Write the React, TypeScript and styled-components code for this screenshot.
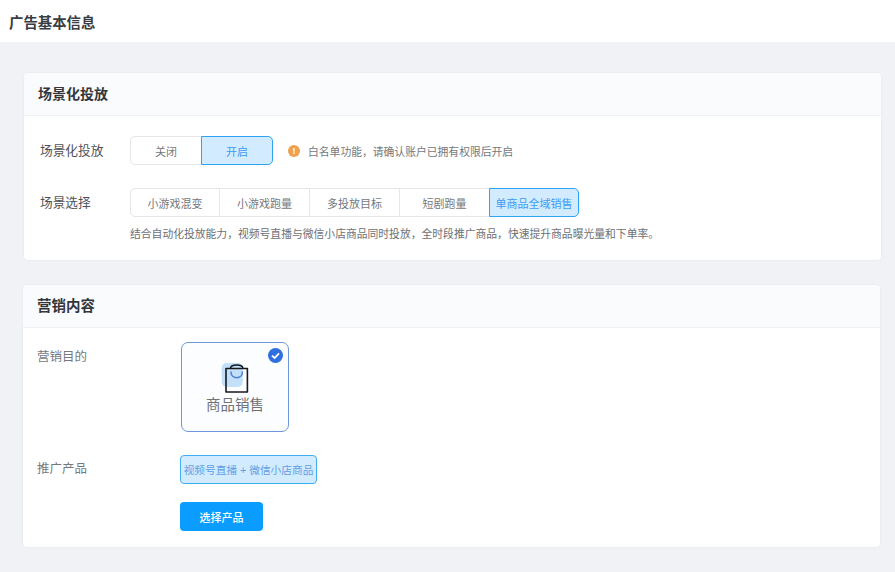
import React from 'react';
import styled, { createGlobalStyle } from 'styled-components';

const GlobalStyle = createGlobalStyle`
  html, body {
    margin: 0;
    padding: 0;
    background: #f0f2f5;
    font-family: "Liberation Sans", "Noto Sans CJK SC", sans-serif;
  }
`;

const Page = styled.div`
  width: 895px;
  height: 572px;
  overflow: hidden;
`;

const TopBar = styled.header`
  height: 42px;
  box-sizing: border-box;
  background: #fff;
  padding: 0 9px;
  display: flex;
  align-items: center;
  font-size: 14.4px;
  font-weight: 700;
  color: #3a3d42;
`;

const Content = styled.main`
  display: flex;
  flex-direction: column;
  gap: 25px;
  padding: 31px 15px 0 23px;
`;

const Card = styled.section<{ $indent?: number }>`
  margin-left: ${(props) => props.$indent || 0}px;
  margin-right: ${(props) => (props.$indent ? -props.$indent : 0)}px;
  background: #fff;
  border-radius: 4px;
  box-shadow: 0 0 2px rgba(40, 50, 70, 0.08);
`;

const CardHead = styled.div<{ $size?: number }>`
  height: 43px;
  box-sizing: border-box;
  display: flex;
  align-items: center;
  padding: 0 0 3px 14px;
  background: #fafbfd;
  border-bottom: 1px solid #eef0f4;
  border-radius: 4px 4px 0 0;
  font-size: ${(props) => props.$size || 14}px;
  font-weight: 700;
  color: #33363b;
`;

const SceneBody = styled.div`
  height: 144px;
  box-sizing: border-box;
  padding: 20px 16px 0;
  display: flex;
  flex-direction: column;
  gap: 23px;
`;

const SceneRow = styled.div`
  display: flex;
  align-items: center;
`;

const SceneLabel = styled.div`
  width: 90px;
  padding-bottom: 2px;
  font-size: 12.7px;
  color: #4e5258;
`;

const Segments = styled.div`
  display: flex;
`;

const Segment = styled.div<{ $width: number; $active?: boolean }>`
  width: ${(props) => props.$width}px;
  height: 29px;
  box-sizing: border-box;
  margin-left: -1px;
  display: flex;
  align-items: center;
  justify-content: center;
  font-size: 11px;
  color: ${(props) => (props.$active ? '#3f9cf2' : '#75787d')};
  background: ${(props) => (props.$active ? '#d2ebff' : '#fff')};
  border: 1px solid ${(props) => (props.$active ? '#2ea4f4' : '#e4e6ea')};
  position: relative;
  z-index: ${(props) => (props.$active ? 1 : 0)};

  &:first-child {
    margin-left: 0;
    border-radius: 5px 0 0 5px;
  }

  &:last-child {
    border-radius: 0 5px 5px 0;
  }
`;

const Notice = styled.div`
  margin-left: 15px;
  display: flex;
  align-items: center;
  gap: 8px;
  font-size: 10.8px;
  color: #75787d;
`;

const NoticeDot = styled.span`
  width: 12px;
  height: 12px;
  border-radius: 50%;
  background: #f0a050;
  color: #fff;
  font-size: 9px;
  font-weight: 700;
  line-height: 12px;
  text-align: center;
`;

const Hint = styled.div`
  margin: -15px 0 0 90px;
  font-size: 10.8px;
  color: #6d7075;
`;

const MarketBody = styled.div`
  height: 219px;
  box-sizing: border-box;
  padding: 14px 0 0 14px;
  display: grid;
  grid-template-columns: 143px 1fr;
  grid-template-rows: 90px 52px 47px;
`;

const MarketLabel = styled.div<{ $top: number }>`
  padding-top: ${(props) => props.$top}px;
  font-size: 12.5px;
  line-height: 14px;
  color: #75787d;
`;

const GoalTile = styled.div`
  position: relative;
  width: 108px;
  height: 90px;
  margin-left: 1px;
  box-sizing: border-box;
  border: 1px solid #6c97dc;
  border-radius: 7px;
  background: #fcfdff;
  display: flex;
  flex-direction: column;
  align-items: center;
  padding-top: 20px;
  gap: 4px;
  font-size: 14.5px;
  line-height: 17px;
  color: #6f7277;
`;

const CheckBadge = styled.svg`
  position: absolute;
  top: 5px;
  right: 5px;
`;

const ProductCell = styled.div`
  padding-top: 23px;
`;

const ProductTag = styled.div`
  width: 137px;
  height: 29px;
  box-sizing: border-box;
  display: flex;
  align-items: center;
  justify-content: center;
  white-space: nowrap;
  font-size: 10.7px;
  color: #5e9fe6;
  background: #d2ebff;
  border: 1px solid #40aef5;
  border-radius: 4px;
`;

const ButtonCell = styled.div`
  padding-top: 18px;
`;

const PickButton = styled.button`
  width: 83px;
  height: 29px;
  padding: 0;
  border: none;
  border-radius: 4px;
  background: #0a9cff;
  color: #fff;
  font-family: inherit;
  font-size: 11px;
  font-weight: 500;
`;

function BagIcon() {
  return (
    <svg width="32" height="30" viewBox="0 0 32 30">
      <rect x="2.7" y="0" width="21" height="24" rx="5" fill="#c3e0fb" />
      <path d="M7 5.5 H28.4 V29 H7 Z" fill="none" stroke="#16191e" strokeWidth="1.6" strokeLinejoin="round" />
      <path d="M11.5 5.5 C11.5 0.8 23.9 0.8 23.9 5.5" fill="none" stroke="#16191e" strokeWidth="1.6" />
      <path d="M12 9 C12 16.5 23.4 16.5 23.4 9" fill="none" stroke="#4d7fd8" strokeWidth="1.5" strokeLinecap="round" />
    </svg>
  );
}

const sceneOptions = ['小游戏混变', '小游戏跑量', '多投放目标', '短剧跑量', '单商品全域销售'];

export default function App() {
  return (
    <Page>
      <GlobalStyle />
      <TopBar>广告基本信息</TopBar>
      <Content>
        <Card $indent={1}>
          <CardHead>场景化投放</CardHead>
          <SceneBody>
            <SceneRow>
              <SceneLabel>场景化投放</SceneLabel>
              <Segments>
                <Segment $width={72}>关闭</Segment>
                <Segment $width={72} $active>开启</Segment>
              </Segments>
              <Notice>
                <NoticeDot>!</NoticeDot>
                白名单功能，请确认账户已拥有权限后开启
              </Notice>
            </SceneRow>
            <SceneRow>
              <SceneLabel>场景选择</SceneLabel>
              <Segments>
                {sceneOptions.map((option, index) => (
                  <Segment key={option} $width={index === 0 ? 90 : index === 4 ? 90 : 91} $active={index === 4}>
                    {option}
                  </Segment>
                ))}
              </Segments>
            </SceneRow>
            <Hint>结合自动化投放能力，视频号直播与微信小店商品同时投放，全时段推广商品，快速提升商品曝光量和下单率。</Hint>
          </SceneBody>
        </Card>
        <Card>
          <CardHead $size={14.5}>营销内容</CardHead>
          <MarketBody>
            <MarketLabel $top={8}>营销目的</MarketLabel>
            <GoalTile>
              <CheckBadge width="15" height="15" viewBox="0 0 15 15">
                <circle cx="7.5" cy="7.5" r="7.5" fill="#2f6fde" />
                <path d="M4 7.6 L6.6 10 L11 5.4" fill="none" stroke="#fff" strokeWidth="1.8" />
              </CheckBadge>
              <BagIcon />
              商品销售
            </GoalTile>
            <MarketLabel $top={30}>推广产品</MarketLabel>
            <ProductCell>
              <ProductTag>视频号直播 + 微信小店商品</ProductTag>
            </ProductCell>
            <div />
            <ButtonCell>
              <PickButton>选择产品</PickButton>
            </ButtonCell>
          </MarketBody>
        </Card>
      </Content>
    </Page>
  );
}
